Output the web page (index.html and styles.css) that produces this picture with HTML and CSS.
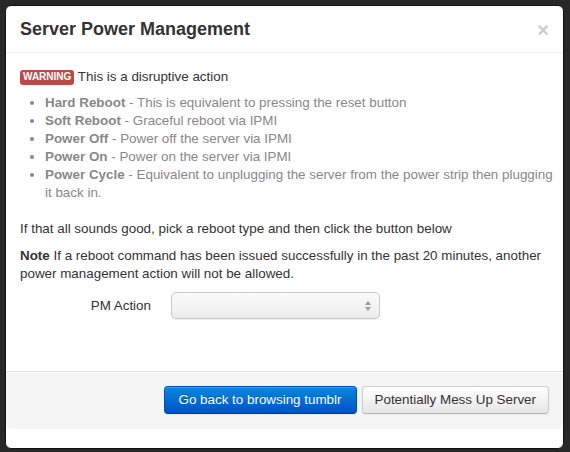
FILE: index.html
```html
<!DOCTYPE html>
<html>
<head>
<meta charset="utf-8">
<link rel="stylesheet" href="styles.css">
</head>
<body>
<div class="page">
  <div class="modal">
    <div class="modal-header">
      <h3>Server Power Management</h3>
      <span class="close">×</span>
    </div>
    <div class="modal-body">
      <p class="warn"><span class="label">Warning</span> This is a disruptive action</p>
      <ul class="muted">
        <li><strong>Hard Reboot</strong> - This is equivalent to pressing the reset button</li>
        <li><strong>Soft Reboot</strong> - Graceful reboot via IPMI</li>
        <li><strong>Power Off</strong> - Power off the server via IPMI</li>
        <li><strong>Power On</strong> - Power on the server via IPMI</li>
        <li><strong>Power Cycle</strong> - Equivalent to unplugging the server from the power strip then plugging it back in.</li>
      </ul>
      <p>If that all sounds good, pick a reboot type and then click the button below</p>
      <p><strong>Note</strong> If a reboot command has been issued successfully in the past 20 minutes, another power management action will not be allowed.</p>
      <div class="control-group">
        <label class="control-label">PM Action</label>
        <span class="select-wrap"><span class="select"></span></span>
      </div>
    </div>
    <div class="modal-footer">
      <button class="btn btn-primary">Go back to browsing tumblr</button>
      <button class="btn btn-default">Potentially Mess Up Server</button>
    </div>
    <div class="modal-tail"></div>
  </div>
</div>
</body>
</html>
```

FILE: styles.css
```css
* { box-sizing: border-box; }
html, body { margin: 0; padding: 0; }
body {
  width: 570px;
  height: 452px;
  overflow: hidden;
  background: #272727;
  font-family: "Liberation Sans", Arial, sans-serif;
  font-size: 13.4px;
  line-height: 18px;
  color: #333;
}
.page {
  padding: 5px 6px 0 5px;
}
.modal {
  width: 559px;
  background: #fff;
  border: 1px solid #111;
  border-radius: 6px;
  overflow: hidden;
}
.modal-header {
  display: flex;
  justify-content: space-between;
  align-items: center;
  padding: 9px 14px 8px 14px;
  border-bottom: 1px solid #eee;
}
.modal-header h3 {
  margin: 0;
  font-size: 18px;
  line-height: 29px;
  font-weight: bold;
  color: #333;
}
.close {
  font-size: 20px;
  font-weight: bold;
  line-height: 18px;
  color: #000;
  opacity: 0.2;
}
.modal-body {
  padding: 15px 6px 52px 14px;
}
.modal-body p { margin: 0 0 9px; }
.warn { margin-bottom: 8px !important; }
.label {
  display: inline-block;
  background: #b94a48;
  color: #fff;
  font-size: 10px;
  font-weight: bold;
  line-height: 12px;
  padding: 1px 3px 2px;
  border-radius: 3px;
  text-transform: uppercase;
  vertical-align: 1px;
}
ul.muted {
  margin: 0 0 18px;
  padding-left: 25px;
  color: #888;
}
.control-group {
  display: flex;
  align-items: center;
}
.control-label {
  width: 131px;
  text-align: right;
  margin-right: 20px;
  color: #333;
}
.select-wrap {
  position: relative;
  display: block;
}
.select {
  display: block;
  width: 209px;
  height: 27px;
  border: 1px solid #c8c8c8;
  border-radius: 5px;
  background: linear-gradient(#fafafa, #ececec);
  box-shadow: 0 1px 0 rgba(0,0,0,0.05);
}
.select-wrap::before,
.select-wrap::after {
  content: "";
  position: absolute;
  right: 9px;
  width: 0;
  height: 0;
  border-left: 3px solid transparent;
  border-right: 3px solid transparent;
}
.select-wrap::before {
  top: 9px;
  border-bottom: 4px solid #999;
}
.select-wrap::after {
  top: 15px;
  border-top: 4px solid #999;
}
.modal-footer {
  display: flex;
  justify-content: flex-end;
  gap: 5px;
  padding: 14px 14px 15px;
  background: #f5f5f5;
  border-top: 1px solid #ddd;
  border-radius: 0 0 6px 6px;
  box-shadow: inset 0 1px 0 #fff;
}
.modal-tail { height: 19px; }
.btn {
  font-family: "Liberation Sans", Arial, sans-serif;
  font-size: 13.4px;
  line-height: 18px;
  height: 28px;
  padding: 4px 14px;
  border: 1px solid #ccc;
  border-bottom-color: #b3b3b3;
  border-radius: 4px;
  color: #333;
  background: linear-gradient(#ffffff, #e6e6e6);
  box-shadow: inset 0 1px 0 rgba(255,255,255,.2), 0 1px 2px rgba(0,0,0,.05);
}
.btn-default {
  padding: 4px 12px;
}
.btn-primary {
  color: #fff;
  background: linear-gradient(#0a88dc, #0052c8);
  border-color: #0050bb #0050bb #00399a;
  text-shadow: 0 -1px 0 rgba(0,0,0,.2);
}
```
